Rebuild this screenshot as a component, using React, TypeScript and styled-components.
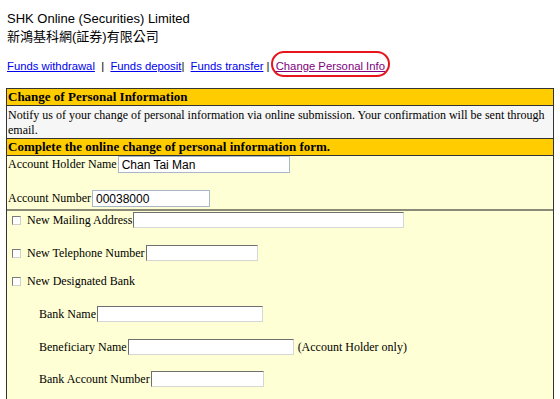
import * as React from 'react'
import styled, { createGlobalStyle } from 'styled-components'

const Global = createGlobalStyle`
    html, body { margin: 0; padding: 0; background: #fff; }
    body { font-family: "Liberation Serif", "Noto Sans CJK TC", serif; color: #000; }
`

const Page = styled.div`
    padding: 10px 6px 0 6px;
`

const Company = styled.div`
    font-family: "Liberation Sans", Arial, "Noto Sans CJK TC", sans-serif;
    font-size: 13px;
    line-height: 18px;
    padding-left: 1px;
`

const NavRow = styled.div`
    margin-top: 5px;
    height: 30px;
    display: flex;
    align-items: center;
    font-family: "Liberation Sans", Arial, sans-serif;
    font-size: 11.3px;
    padding-left: 1px;
    white-space: pre;
`

const NavLink = styled.a<{ visited?: boolean }>`
    color: ${p => p.visited ? '#800080' : '#0000ee'};
    text-decoration: underline;
    cursor: pointer;
`

const Circled = styled.span`
    display: inline-flex;
    align-items: center;
    box-sizing: border-box;
    height: 26px;
    padding: 3px 3px 0 3px;
    margin: -4px 0 0 -2px;
    border: 2px solid #e8141b;
    border-radius: 14px;
`

const Table = styled.div`
    margin-top: 7px;
    border: 1px solid #333;
    border-bottom: none;
    font-size: 12px;
`

const Head = styled.div`
    background: #ffcc00;
    font-weight: bold;
    font-size: 13px;
    padding: 0 2px 0 1px;
    line-height: 16px;
    border-bottom: 1px solid #333;
`

const Note = styled.div`
    background: #f6f6f6;
    padding: 2px 2px 0 1px;
    line-height: 15px;
    border-bottom: 1px solid #333;
`

const AccountBlock = styled.div`
    background: #ffffd5;
    padding: 0 2px 2px 1px;
    border-bottom: 2px solid #8a8a78;
    display: flex;
    flex-direction: column;
`

const Line = styled.div<{ h: number }>`
    height: ${p => p.h}px;
    display: flex;
    align-items: center;
    white-space: pre;
`

const ChangesBlock = styled.div`
    background: #ffffd5;
    padding: 1px 2px 20px 5px;
    display: flex;
    flex-direction: column;
`

const Sub = styled.div`
    padding-left: 27px;
    display: flex;
    flex-direction: column;
`

const Check = styled.span`
    display: inline-block;
    box-sizing: border-box;
    width: 9px;
    height: 9px;
    border: 1px solid #7a7a7a;
    border-right-color: #d0d0d0;
    border-bottom-color: #d0d0d0;
    background: #fff;
    margin: 0 6px 0 0;
`

const Field = styled.input<{ w: number, h?: number, flat?: boolean }>`
    width: ${p => p.w}px;
    height: ${p => p.h || 16}px;
    box-sizing: border-box;
    margin: 0 0 0 1px;
    padding: 0 3px;
    font-family: "Liberation Sans", Arial, sans-serif;
    font-size: 12px;
    color: #000;
    background: #fff;
    outline: none;
    border: 1px solid ${p => p.flat ? '#a9b8c9' : '#d6d6d6'};
    ${p => p.flat ? '' : 'border-top-color: #6f6f6f; border-left-color: #6f6f6f;'}
`

const Label = styled.span``

const Hint = styled.span`
    margin-left: 1px;
`

export default function App()
{
    return (
        <Page>
            <Global />
            <Company>SHK Online (Securities) Limited</Company>
            <Company>新鴻基科網(証券)有限公司</Company>
            <NavRow>
                <NavLink>Funds withdrawal</NavLink>{'  |  '}
                <NavLink>Funds deposit</NavLink>{'|  '}
                <NavLink>Funds transfer</NavLink>{' | '}
                <Circled><NavLink visited>Change Personal Info</NavLink></Circled>
            </NavRow>
            <Table>
                <Head>Change of Personal Information</Head>
                <Note>Notify us of your change of personal information via online submission. Your confirmation will be sent through email.</Note>
                <Head>Complete the online change of personal information form.</Head>
                <AccountBlock>
                    <Line h={17}><Label>Account Holder Name</Label><Field w={172} h={17} flat readOnly value="Chan Tai Man" /></Line>
                    <Line h={17} />
                    <Line h={17}><Label>Account Number</Label><Field w={118} h={17} flat readOnly value="00038000" /></Line>
                </AccountBlock>
                <ChangesBlock>
                    <Line h={16}><Check /><Label>New Mailing Address</Label><Field w={271} /></Line>
                    <Line h={17} />
                    <Line h={16}><Check /><Label>New Telephone Number</Label><Field w={112} /></Line>
                    <Line h={12} />
                    <Line h={16}><Check /><Label>New Designated Bank</Label></Line>
                    <Sub>
                        <Line h={17} />
                        <Line h={16}><Label>Bank Name</Label><Field w={166} /></Line>
                        <Line h={17} />
                        <Line h={16}><Label>Beneficiary Name</Label><Field w={166} /><Hint> (Account Holder only)</Hint></Line>
                        <Line h={16} />
                        <Line h={16}><Label>Bank Account Number</Label><Field w={113} /></Line>
                    </Sub>
                </ChangesBlock>
            </Table>
        </Page>
    )
}
